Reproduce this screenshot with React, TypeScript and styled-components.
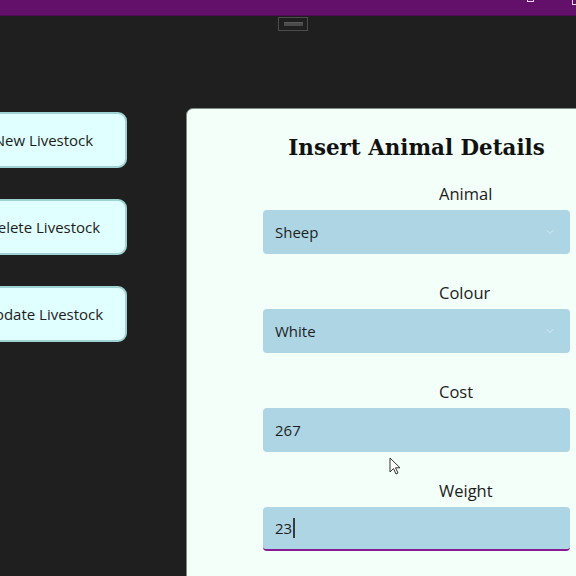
import React from "react";
import styled, { createGlobalStyle } from "styled-components";
import { ChevronDown } from "lucide-react";

const Global = createGlobalStyle`
  html, body { margin: 0; padding: 0; background: #1f1f1f; overflow: hidden; }
  body { width: 576px; height: 576px; font-family: "Open Sans", "Noto Sans", sans-serif; }
`;

const Page = styled.div`
  position: relative;
  width: 576px;
  height: 576px;
  overflow: hidden;
  background: #1f1f1f;
`;

const TitleBar = styled.div`
  height: 16px;
  background: #62106a;
  border-bottom: 1px solid #4e0d55;
  box-sizing: border-box;
  position: relative;
`;

const Corner = styled.span<{ $x: number; $w: number; $h: number }>`
  position: absolute;
  top: 0;
  left: ${(p) => p.$x}px;
  width: ${(p) => p.$w}px;
  height: ${(p) => p.$h}px;
  border: 1px solid #e8d8ec;
  border-top: none;
  box-sizing: border-box;
`;

const HandleRow = styled.div`
  height: 16px;
  padding-left: 278px;
  padding-top: 1px;
`;

const Handle = styled.div`
  width: 30px;
  height: 14px;
  border: 1px solid #4c4c4c;
  box-sizing: border-box;
  display: flex;
  align-items: center;
  justify-content: center;
  &::after {
    content: "";
    width: 19px;
    height: 3px;
    background: #4a4a4a;
    border-top: 1px solid #5a5a5a;
  }
`;

const Main = styled.div`
  display: flex;
  align-items: flex-start;
  padding-top: 75px;
`;

const ButtonColumn = styled.div`
  display: flex;
  flex-direction: column;
  gap: 31px;
  margin-left: -36px;
  margin-top: 4px;
  width: 163px;
  flex-shrink: 0;
`;

const SideButton = styled.button`
  height: 56px;
  width: 100%;
  background: #e0ffff;
  border: 2px solid #9fd3d3;
  border-radius: 9px;
  font-family: "Open Sans", "Noto Sans", sans-serif;
  font-size: 15px;
  color: #1c1c1c;
  text-align: center;
  padding: 0 4px 0 0;
  box-sizing: border-box;
`;

const Panel = styled.section`
  margin-left: 59px;
  width: 440px;
  height: 480px;
  flex-shrink: 0;
  background: #f3fff9;
  border: 1px solid #7d8a86;
  border-radius: 7px;
  box-sizing: border-box;
  padding: 25px 0 0 76px;
`;

const Form = styled.div`
  width: 307px;
  display: flex;
  flex-direction: column;
`;

const Heading = styled.h1`
  margin: 0 0 20px;
  height: 28px;
  line-height: 28px;
  text-align: center;
  font-family: "DejaVu Serif", "Liberation Serif", serif;
  font-weight: bold;
  font-size: 21.4px;
  color: #111;
  white-space: nowrap;
`;

const Field = styled.div`
  display: flex;
  flex-direction: column;
  gap: 4px;
  margin-bottom: 27px;
`;

const Label = styled.label`
  height: 24px;
  line-height: 24px;
  padding-left: 176px;
  font-size: 16.5px;
  color: #1c1c1c;
`;

const Box = styled.div<{ $focused?: boolean }>`
  height: 44px;
  background: #add5e4;
  border-radius: 4px;
  display: flex;
  align-items: center;
  justify-content: space-between;
  padding: 0 14px 1px 12px;
  box-sizing: border-box;
  font-size: 15px;
  color: #1e1e1e;
  border-bottom: ${(p) => (p.$focused ? "2px solid #861b95" : "none")};
`;

const Value = styled.span`
  display: flex;
  align-items: center;
`;

const Caret = styled.span`
  display: inline-block;
  width: 1.5px;
  height: 20px;
  background: #3a3a3a;
  margin-left: 1px;
`;

const Pointer = styled.svg`
  position: absolute;
  left: 389px;
  top: 457px;
`;

const fields = [
  { label: "Animal", value: "Sheep", select: true },
  { label: "Colour", value: "White", select: true },
  { label: "Cost", value: "267" },
  { label: "Weight", value: "23", focused: true },
];

export default function App() {
  return (
    <Page>
      <Global />
      <TitleBar>
        <Corner $x={527} $w={7} $h={2} />
        <Corner $x={572} $w={8} $h={5} />
      </TitleBar>
      <HandleRow>
        <Handle />
      </HandleRow>
      <Main>
        <ButtonColumn>
          <SideButton>New Livestock</SideButton>
          <SideButton>Delete Livestock</SideButton>
          <SideButton>Update Livestock</SideButton>
        </ButtonColumn>
        <Panel>
          <Form>
            <Heading>Insert Animal Details</Heading>
            {fields.map((f) => (
              <Field key={f.label}>
                <Label>{f.label}</Label>
                <Box $focused={f.focused}>
                  <Value>
                    {f.value}
                    {f.focused && <Caret />}
                  </Value>
                  {f.select && <ChevronDown size={12} color="#e4f1f6" strokeWidth={1.5} />}
                </Box>
              </Field>
            ))}
          </Form>
        </Panel>
      </Main>
      <Pointer width="12" height="19" viewBox="0 0 12 19">
        <path d="M1 1 L1 15 L4.5 11.5 L7 17 L9 16 L6.5 10.8 L11 10.8 Z" fill="#fff" stroke="#333" strokeWidth="1" strokeLinejoin="round" />
      </Pointer>
    </Page>
  );
}
